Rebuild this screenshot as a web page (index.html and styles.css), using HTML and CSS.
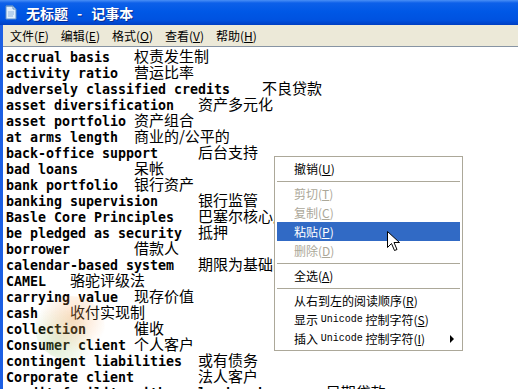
FILE: index.html
```html
<!DOCTYPE html>
<html lang="zh-CN">
<head>
  <meta charset="UTF-8">
  <title>无标题 - 记事本</title>
  <link rel="stylesheet" href="styles.css">
</head>
<body>
  <div class="window">
    <div class="titlebar">
      <svg class="app-icon" width="12" height="15" viewBox="0 0 12 15">
        <path d="M1 1h7l3 3v10H1z" fill="#dfeefc" stroke="#5f8fc8"/>
        <path d="M1 1h7v3h3" fill="none" stroke="#5f8fc8"/>
        <path d="M3 7h6M3 9h6M3 11h5" stroke="#8fb4de"/>
      </svg>
      <span class="title">无标题<span class="dash">-</span>记事本</span>
    </div>

    <div class="frame">
      <div class="menubar">
        <span class="menu-item">文件(<u>F</u>)</span>
        <span class="menu-item">编辑(<u>E</u>)</span>
        <span class="menu-item">格式(<u>O</u>)</span>
        <span class="menu-item">查看(<u>V</u>)</span>
        <span class="menu-item">帮助(<u>H</u>)</span>
      </div>

      <div class="editor">
<pre>accrual basis	<span class="zh">权责发生制</span>
activity ratio	<span class="zh">营运比率</span>
adversely classified credits	<span class="zh">不良贷款</span>
asset diversification	<span class="zh">资产多元化</span>
asset portfolio	<span class="zh">资产组合</span>
at arms length	<span class="zh">商业的/公平的</span>
back-office support	<span class="zh">后台支持</span>
bad loans	<span class="zh">呆帐</span>
bank portfolio	<span class="zh">银行资产</span>
banking supervision	<span class="zh">银行监管</span>
Basle Core Principles	<span class="zh">巴塞尔核心原则</span>
be pledged as security	<span class="zh">抵押</span>
borrower	<span class="zh">借款人</span>
calendar-based system	<span class="zh">期限为基础的制度</span>
CAMEL	<span class="zh">骆驼评级法</span>
carrying value	<span class="zh">现存价值</span>
cash	<span class="zh">收付实现制</span>
collection	<span class="zh">催收</span>
Consumer client	<span class="zh">个人客户</span>
contingent liabilities	<span class="zh">或有债务</span>
Corporate client	<span class="zh">法人客户</span>
credit facility with early drawdown	<span class="zh">早期贷款</span></pre>
      </div>
    </div>

    <div class="watermark"></div>

    <div class="context-menu">
      <div class="cm-item">撤销(<u>U</u>)</div>
      <div class="cm-sep"></div>
      <div class="cm-item disabled">剪切(<u>T</u>)</div>
      <div class="cm-item disabled">复制(<u>C</u>)</div>
      <div class="cm-item active">粘贴(<u>P</u>)</div>
      <div class="cm-item disabled">删除(<u>D</u>)</div>
      <div class="cm-sep"></div>
      <div class="cm-item">全选(<u>A</u>)</div>
      <div class="cm-sep"></div>
      <div class="cm-item">从右到左的阅读顺序(<u>R</u>)</div>
      <div class="cm-item">显示 <span class="latin">Unicode</span> 控制字符(<u>S</u>)</div>
      <div class="cm-item">插入 <span class="latin">Unicode</span> 控制字符(<u>I</u>)<span class="submenu-arrow"></span></div>
    </div>

    <svg class="cursor" width="13" height="21" viewBox="0 0 13 21">
      <path d="M0.5 0.5v16l4-4 3 7 2.5-1-3-7h5.5z" fill="#fff" stroke="#000" stroke-linejoin="miter"/>
    </svg>
  </div>
</body>
</html>
```

FILE: styles.css
```css
body {
  margin: 0;
  width: 518px;
  height: 389px;
  overflow: hidden;
  background: #fff;
  font-family: "Noto Sans CJK SC", sans-serif;
}

.window {
  position: relative;
  height: 389px;
}

.titlebar {
  height: 25px;
  display: flex;
  align-items: center;
  padding-left: 5px;
  background: linear-gradient(#4a8ff6 0, #0d60e9 3px, #0058e6 45%, #0052e0 80%, #003fc2 100%);
}

.app-icon {
  margin-right: 9px;
}

.title {
  color: #fff;
  font-size: 14px;
  font-weight: 700;
  text-shadow: 1px 1px #0b2c8f;
}

.dash {
  margin: 0 9px;
}

.frame {
  border-left: 3px solid #1c5fe4;
}

.menubar {
  height: 21px;
  display: flex;
  align-items: center;
  background: #ece9d8;
  padding-left: 1px;
  font-size: 12px;
  color: #000;
}

.menu-item {
  padding: 0 6px;
  line-height: 21px;
}

.editor {
  border-top: 1px solid #8794a3;
  height: 342px;
  overflow: hidden;
  background: #fff;
}

.editor pre {
  margin: 0;
  padding: 3px 0 0 3px;
  font-family: "DejaVu Sans Mono", monospace;
  font-weight: 700;
  font-size: 13.29px;
  line-height: 16px;
  tab-size: 8;
  color: #000;
}

.zh {
  font-family: "Noto Sans CJK SC", sans-serif;
  font-weight: 400;
  font-size: 15px;
  line-height: 16px;
  vertical-align: top;
  position: relative;
  top: -2px;
}

.watermark {
  position: absolute;
  left: 35px;
  top: 296px;
  width: 70px;
  height: 64px;
  border-radius: 50%;
  background:
    radial-gradient(circle at 55% 35%, rgba(245, 160, 80, 0.35), rgba(245, 160, 80, 0) 60%),
    radial-gradient(circle at 30% 75%, rgba(140, 190, 90, 0.25), rgba(140, 190, 90, 0) 55%);
  pointer-events: none;
}

.context-menu {
  position: absolute;
  left: 274px;
  top: 156px;
  width: 189px;
  height: 195px;
  box-sizing: border-box;
  border: 1px solid #aca899;
  background: #fff;
  padding: 2px 2px;
  font-size: 12px;
  color: #000;
}

.cm-item {
  height: 19px;
  display: flex;
  align-items: center;
  padding-left: 17px;
  white-space: pre;
}

.cm-item.disabled {
  color: #aca899;
}

.cm-item.active {
  background: #316ac5;
  color: #fff;
}

.latin {
  font-family: "Liberation Mono", monospace;
  font-size: 10px;
}

.submenu-arrow {
  margin-left: auto;
  margin-right: 6px;
  width: 0;
  height: 0;
  border-top: 4px solid transparent;
  border-bottom: 4px solid transparent;
  border-left: 4px solid #000;
}

.cm-sep {
  height: 6px;
  display: flex;
  align-items: center;
}

.cm-sep::before {
  content: "";
  flex: 1;
  height: 1px;
  background: #aca899;
}

.cursor {
  position: absolute;
  left: 387px;
  top: 231px;
}
```
